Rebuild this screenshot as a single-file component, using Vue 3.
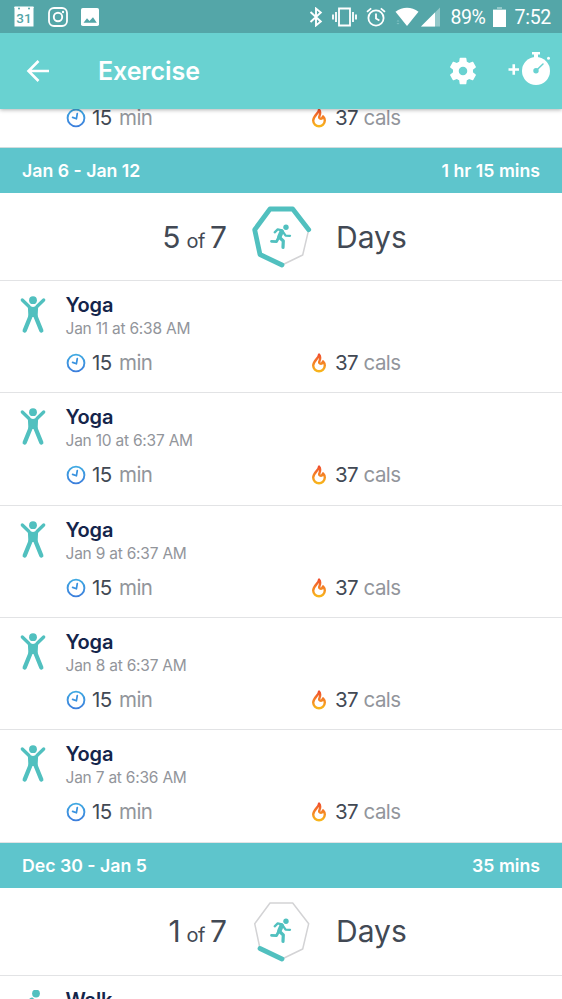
<script setup>
const corners = [[30, 59], [8, 48.5], [2.7, 23.7], [18, 3], [40.7, 3], [56.7, 23.7], [50.7, 49]]
const toPoints = list => list.map(p => p.join(',')).join(' ')
const outline = toPoints(corners)
const progress = days => toPoints(corners.slice(0, days + 1))

const weeks = [
  {
    range: 'Jan 6 - Jan 12',
    total: '1 hr 15 mins',
    days: 5,
    entries: [
      { name: 'Yoga', when: 'Jan 11 at 6:38 AM' },
      { name: 'Yoga', when: 'Jan 10 at 6:37 AM' },
      { name: 'Yoga', when: 'Jan 9 at 6:37 AM' },
      { name: 'Yoga', when: 'Jan 8 at 6:37 AM' },
      { name: 'Yoga', when: 'Jan 7 at 6:36 AM' }
    ]
  },
  {
    range: 'Dec 30 - Jan 5',
    total: '35 mins',
    days: 1,
    entries: [{ name: 'Walk', walk: true }]
  }
]
</script>

<template>
  <div class="screen">
    <svg class="defs" width="0" height="0" aria-hidden="true">
      <defs>
        <linearGradient id="blue" x1="0" y1="0" x2="0" y2="1">
          <stop offset="0" stop-color="#3fa9e2" /><stop offset="1" stop-color="#3c7fdc" />
        </linearGradient>
        <linearGradient id="fire" x1="0" y1="0" x2="0" y2="1">
          <stop offset="0" stop-color="#f0502e" /><stop offset="1" stop-color="#f8b51c" />
        </linearGradient>
        <symbol id="clock" viewBox="0 0 20 20">
          <circle cx="10" cy="10" r="8.4" fill="none" stroke="url(#blue)" stroke-width="1.9" />
          <path d="M11.3 5.5 10.4 10.8 6.6 9.4" fill="none" stroke="#3992df" stroke-width="1.7" stroke-linecap="round" stroke-linejoin="round" />
        </symbol>
        <symbol id="flame" viewBox="0 0 16 20">
          <path d="M8 1.6C8.300 5 2.200 7.600 2.200 12.600A5.800 5.600 0 0 0 13.800 12.600C13.800 10.600 12.900 9.300 12 8.400 11.600 9.900 10.900 10.700 9.900 10.700 8.300 10.700 7.800 9.500 8.500 7.900 9.300 5.800 9.800 3.600 8 1.600Z" fill="none" stroke="url(#fire)" stroke-width="2.400" stroke-linejoin="round" />
        </symbol>
      </defs>
    </svg>

    <header class="top">
      <div class="status">
        <div class="notices">
          <svg width="22" height="23" viewBox="0 0 22 23">
            <path d="M2 1.5h18a1 1 0 0 1 .5 1.8V21.5h-19V3.3A1 1 0 0 1 2 1.5Z" fill="#fff" />
            <circle cx="6" cy="3.6" r="1" fill="#54a6a8" /><circle cx="16" cy="3.6" r="1" fill="#54a6a8" />
            <text x="11" y="17.700" text-anchor="middle" class="cal">31</text>
          </svg>
          <svg width="20" height="20" viewBox="0 0 20 20" fill="none" stroke="#fff">
            <rect x="1" y="1" width="18" height="18" rx="5" stroke-width="1.8" />
            <circle cx="10" cy="10" r="4.2" stroke-width="1.9" />
            <circle cx="15" cy="5" r="1.2" fill="#fff" stroke="none" />
          </svg>
          <svg width="18" height="18" viewBox="0 0 18 18">
            <rect width="18" height="18" rx="1.8" fill="#fff" />
            <path d="M2.5 14.8 6 10.3 8.5 13 12 9.3 15.8 14.8Z" fill="#54a6a8" />
          </svg>
        </div>
        <div class="system">
          <svg class="bt" width="14" height="20" viewBox="0 0 14 20" fill="none" stroke="#fff" stroke-width="1.900">
            <path d="M1.5 5 11.800 14.500 7 18.400V1.600L11.800 5.500 1.500 15" />
          </svg>
          <svg class="vib" width="25" height="20" viewBox="0 0 25 20" fill="none" stroke="#fff" stroke-width="1.800">
            <path d="M7 1.500h11v17H7Z M4 5v10M1 7.500v5M21 5v10M24 7.500v5" />
          </svg>
          <svg class="alarm" width="20" height="20" viewBox="0 0 20 20" fill="none" stroke="#fff" stroke-width="1.800">
            <circle cx="10" cy="11" r="7.600" /><path d="M10 6.500v5l3.400 2M1 4.900 5.200 1.400M19 4.900 14.800 1.400" />
          </svg>
          <svg class="wifi" width="24" height="20" viewBox="0 0 24 20">
            <path d="M.5 4.800C7.500-.6 16.500-.6 23.500 4.800L12 19Z" fill="#fff" />
            <path d="M1.500 14.500 3 13l1.500 1.500ZM1.500 16 3 17.500 4.500 16Z" fill="#7fc0c1" />
          </svg>
          <svg class="cell" width="20" height="20" viewBox="0 0 20 20">
            <path d="M0 19.500 19 .5v19Z" fill="#93c8c9" /><path d="M0 19.500 14 5.500v14Z" fill="#fff" />
          </svg>
          <span class="pct">89%</span>
          <svg class="bat" width="13" height="20" viewBox="0 0 13 20">
            <path d="M4 0h5v2h4v3H0V2h4Z" fill="#93c8c9" /><path d="M0 3h13v17H0Z" fill="#fff" />
          </svg>
          <span class="time">7:52</span>
        </div>
      </div>
      <div class="appbar">
        <svg class="back" width="24" height="24" viewBox="0 0 24 24" fill="none" stroke="#fff" stroke-width="2.600">
          <path d="M23 12H3M12.500 2 2.500 12l10 10" />
        </svg>
        <h1>Exercise</h1>
        <svg class="gear" width="32" height="32" viewBox="0 0 24 24">
          <path fill="#fff" d="M19.430 12.980c.04-.32.07-.64.07-.98s-.03-.66-.07-.98l2.110-1.650c.19-.15.24-.42.12-.64l-2-3.460c-.12-.22-.39-.3-.61-.22l-2.490 1c-.52-.4-1.080-.73-1.690-.98l-.38-2.650C14.460 2.180 14.250 2 14 2h-4c-.25 0-.46.18-.49.42l-.38 2.650c-.61.25-1.170.59-1.690.98l-2.490-1c-.23-.09-.49 0-.61.22l-2 3.460c-.13.22-.07.49.12.64l2.110 1.650c-.04.32-.07.65-.07.98s.03.66.07.98l-2.110 1.650c-.19.15-.24.42-.12.64l2 3.460c.12.22.39.3.61.22l2.490-1c.52.4 1.080.73 1.690.98l.38 2.650c.03.24.24.42.49.42h4c.25 0 .46-.18.49-.42l.38-2.650c.61-.25 1.170-.59 1.690-.98l2.490 1c.23.09.49 0 .61-.22l2-3.460c.12-.22.07-.49-.12-.64l-2.110-1.650ZM12 15.200c-1.770 0-3.200-1.430-3.200-3.200s1.430-3.200 3.200-3.200 3.200 1.430 3.200 3.200-1.430 3.200-3.200 3.200Z" />
        </svg>
        <svg class="timer" width="44" height="36" viewBox="0 0 44 36">
          <path d="M1.500 19.500H12M6.750 14.300v10.400" stroke="#fff" stroke-width="2.600" />
          <circle cx="29" cy="21" r="14" fill="#fff" />
          <path d="M25 2h8v2.500h-2V8h-4V4.500h-2Z" fill="#fff" />
          <circle cx="41.500" cy="8.200" r="1.500" fill="#fff" />
          <circle cx="29" cy="20.700" r="2.700" fill="#69d2d1" />
          <path d="M29 20.700 36 14" stroke="#69d2d1" stroke-width="1.500" stroke-linecap="round" />
        </svg>
      </div>
    </header>

    <main>
      <div class="stats clipped">
        <svg class="clock" width="20" height="20"><use href="#clock" /></svg>
        <span class="minutes"><b>15</b>min</span>
        <svg class="flame" width="16" height="20"><use href="#flame" /></svg>
        <span class="cals"><b>37</b>cals</span>
      </div>

      <section v-for="week in weeks" :key="week.range">
        <div class="weekbar"><span>{{ week.range }}</span><span>{{ week.total }}</span></div>
        <div class="summary">
          <div class="count"><span class="big">{{ week.days }}</span><span class="of">of</span><span class="big">7</span></div>
          <svg width="60" height="62" viewBox="0 0 60 62" fill="none" stroke-linecap="round" stroke-linejoin="round">
            <polygon :points="outline" stroke="#d3d3d5" stroke-width="1.500" />
            <polyline :points="progress(week.days)" stroke="#51c0bf" stroke-width="4.800" />
            <circle cx="34" cy="21.300" r="2.700" fill="#51c0bf" />
            <g stroke="#51c0bf">
              <path d="M22.700 26.300 25.700 23.400 30 24.300 33.600 29.600 38 29.800" stroke-width="2.300" />
              <path d="M29.700 25.500 27.300 31" stroke-width="4.400" />
              <path d="M27.600 31.500 31.300 35 31 41.300" stroke-width="3.200" />
              <path d="M26.700 31.500 24.500 35.700 19.500 35.300" stroke-width="2.800" />
            </g>
          </svg>
          <span class="big days">Days</span>
        </div>
        <article v-for="(entry, i) in week.entries" :key="i" class="entry">
          <svg v-if="entry.walk" class="figure" width="28" height="40" viewBox="0 0 28 40">
            <circle cx="17" cy="3.500" r="3.900" fill="#51c0bf" />
            <path d="M13 9.500 7 13.500 6 19M14 10.500 13 22 18 36M13 22 6 36" fill="none" stroke="#51c0bf" stroke-width="4" stroke-linecap="round" />
          </svg>
          <svg v-else class="figure" width="28" height="40" viewBox="0 0 28 40">
            <circle cx="14" cy="5.200" r="3.900" fill="#51c0bf" />
            <path d="M8.800 10.500 14 12 19.200 10.500 18.600 22H9.400Z" fill="#51c0bf" />
            <g fill="none" stroke="#51c0bf" stroke-linecap="round" stroke-linejoin="round">
              <path d="M3.300 5 10 11.500M24.700 5 18 11.500" stroke-width="3.300" />
              <path d="M11.600 21 5.700 35.500M16.400 21 22.300 35.500" stroke-width="4.300" />
            </g>
          </svg>
          <div class="body">
            <h2>{{ entry.name }}</h2>
            <template v-if="entry.when">
              <p>{{ entry.when }}</p>
              <div class="stats">
                <svg class="clock" width="20" height="20"><use href="#clock" /></svg>
                <span class="minutes"><b>15</b>min</span>
                <svg class="flame" width="16" height="20"><use href="#flame" /></svg>
                <span class="cals"><b>37</b>cals</span>
              </div>
            </template>
          </div>
        </article>
      </section>
    </main>
  </div>
</template>

<style>
body { margin: 0; background: #fff; }
</style>

<style scoped>
.screen { width: 562px; height: 999px; overflow: hidden; display: flex; flex-direction: column; background: #fff; font-family: Inter, "Liberation Sans", sans-serif; color: #424954; }
.defs { position: absolute; }
svg { display: block; flex: none; }
.top { flex: none; z-index: 1; box-shadow: 0 1px 4px rgba(0, 0, 0, .3); }
.status { height: 33px; box-sizing: border-box; background: #54a6a8; display: flex; justify-content: space-between; padding: 0 11px 0 13px; color: #fff; font: 400 19.500px/33px Roboto, sans-serif; }
.notices, .system { display: flex; align-items: center; }
.notices { gap: 13px; }
.cal { font: 500 13.500px Roboto, sans-serif; fill: #54a6a8; }
.vib { margin-left: 9px; }
.alarm { margin-left: 9px; }
.wifi { margin-left: 9px; }
.cell { margin-left: 2px; }
.pct { margin-left: 10px; padding-top: 2px; width: 37px; letter-spacing: -.5px; }
.bat { margin-left: 5px; }
.time { margin-left: 9px; padding-top: 2px; letter-spacing: -.3px; }
.appbar { height: 76px; background: #69d2d1; display: flex; align-items: center; padding: 0 11px 0 26px; }
h1 { margin: 0 auto 0 48px; font-size: 25px; line-height: 32px; font-weight: 600; letter-spacing: -.1px; color: #fff; }
.timer { margin: -6px 0 0 28px; }
main { flex: 1; min-height: 0; overflow: hidden; }
.stats { display: flex; align-items: center; height: 30px; font-size: 20.500px; line-height: 30px; color: #92959b; }
.stats b { font-weight: 400; color: #424954; }
.clipped { padding: 0 0 14px 66px; margin-top: -6px; border-bottom: 1px solid #d2dcdd; }
.minutes { margin-left: 6px; width: 218px; letter-spacing: -.6px; }
.minutes b { margin-right: 7.500px; }
.flame { margin-left: 1px; }
.cals { margin-left: 8px; letter-spacing: -.6px; }
.cals b { margin-right: 5.500px; }
.weekbar { height: 45px; box-sizing: border-box; padding: 0 22px; display: flex; align-items: center; justify-content: space-between; background: #5ec5cc; color: #fff; font-size: 17.700px; font-weight: 600; }
.summary { height: 88px; box-sizing: border-box; border-bottom: 1px solid #e2e3e5; display: grid; grid-template-columns: 227px 60px 1fr; column-gap: 24.500px; align-items: center; }
.summary .big { font-size: 30px; line-height: 40px; }
.count { display: flex; justify-content: flex-end; align-items: baseline; }
.of { font-size: 20px; margin: 0 5px 0 6px; letter-spacing: -.5px; }
.entry { height: 112.330px; box-sizing: border-box; border-bottom: 1px solid #e2e3e5; display: flex; padding: 10px 0 0 19px; }
.body { flex: 1; margin-left: 18.500px; }
.body .stats { margin-left: .5px; margin-top: 8px; }
h2 { margin: 2px 0 0; font-size: 20px; line-height: 24px; font-weight: 600; letter-spacing: -.2px; color: #14254b; }
p { margin: 1px 0 0; height: 22px; font-size: 15.500px; line-height: 22px; letter-spacing: -.22px; color: #92959b; }
.figure { margin-top: 4px; }
</style>
